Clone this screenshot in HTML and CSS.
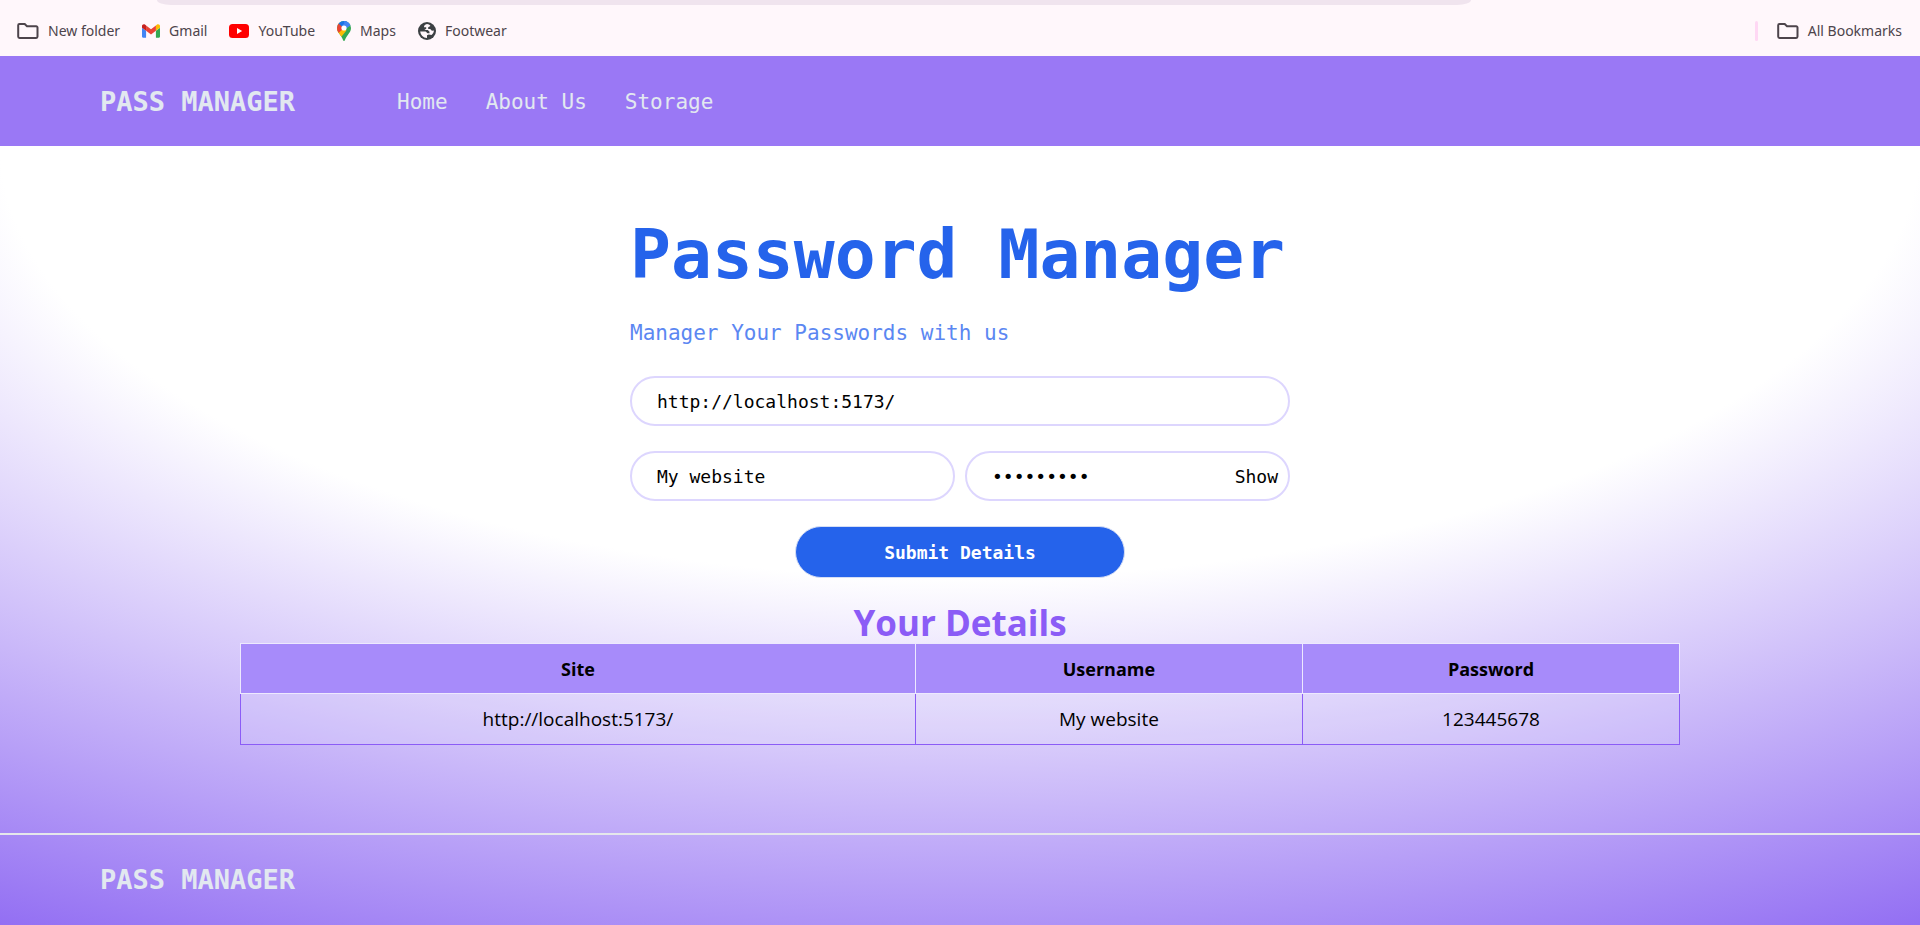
FILE: index.html
```html
<!DOCTYPE html>
<html lang="en">
<head>
<meta charset="utf-8">
<meta name="viewport" content="width=device-width, initial-scale=1">
<title>Pass Manager</title>
<link rel="stylesheet" href="styles.css">
</head>
<body>
<div class="bookmarks">
  <div class="toolbar-edge"></div>
  <ul class="bookmark-list">
    <li><a class="bookmark" href="#">
      <svg class="icon-folder" viewBox="0 0 22 16" aria-hidden="true"><path d="M2.5 1h5.2l2.3 2.3h9.2a1.3 1.3 0 0 1 1.3 1.3v9a1.3 1.3 0 0 1-1.3 1.3H2.5a1.3 1.3 0 0 1-1.3-1.3V2.3A1.3 1.3 0 0 1 2.5 1z"/></svg>
      New folder</a></li>
    <li><a class="bookmark" href="#">
      <svg class="icon-gmail" viewBox="52 42 88 66" aria-hidden="true"><path fill="#4285f4" d="M58 108h14V74L52 59v43c0 3.3 2.7 6 6 6"/><path fill="#34a853" d="M120 108h14c3.3 0 6-2.7 6-6V59l-20 15"/><path fill="#fbbc04" d="M120 48v26l20-15v-8c0-7.400-8.500-11.700-14.400-7.200"/><path fill="#ea4335" d="M72 74V48l24 18 24-18v26L96 92"/><path fill="#c5221f" d="M52 51v8l20 15V48l-5.600-4.200C60.500 39.300 52 43.600 52 51"/></svg>
      Gmail</a></li>
    <li><a class="bookmark" href="#">
      <svg class="icon-youtube" viewBox="0 0 20 14" aria-hidden="true"><rect width="20" height="14" rx="3.500" fill="#f00"/><path fill="#fff" d="M8 4v6l5.200-3z"/></svg>
      YouTube</a></li>
    <li><a class="bookmark" href="#">
      <svg class="icon-maps" viewBox="0 0 14 20" aria-hidden="true">
        <defs><clipPath id="pin"><path d="M7 0a7 7 0 0 1 7 7c0 3-1.500 4.600-3.200 6.900C9.300 15.900 8.500 17.500 7.900 19.300c-.3.900-1.500.9-1.800 0-.6-1.800-1.400-3.400-2.900-5.400C1.500 11.600 0 10 0 7a7 7 0 0 1 7-7z"/></clipPath></defs>
        <g clip-path="url(#pin)"><path fill="#34a853" d="M0 0h14v20H0z"/><path fill="#fbbc04" d="M-1 8l4-3 6.500 4.500-7 8.500z"/><path fill="#ea4335" d="M0 1l7 6-5.500 5L-2 7z"/><path fill="#1a73e8" d="M1.500 2.400L5 5.400 10 0H3z"/><path fill="#4285f4" d="M6 7L13 0h-3L4.500 5z"/><path fill="#4285f4" d="M7 0h7v4L8.500 8z"/></g><circle cx="7" cy="7" r="2.600" fill="#fff"/>
      </svg>
      Maps</a></li>
    <li><a class="bookmark" href="#">
      <svg class="icon-globe" viewBox="0 0 18 18" aria-hidden="true"><circle cx="9" cy="9" r="9" fill="#3c4043"/><path fill="#fff7fb" d="M9 2c-2.200.5-3 1.500-3 3.200h2.200v1.600L6.400 8H9.800l1.700 1.700v1.600h-2l-1.800-1.700H2.200C2.600 13 5.200 16 9 16v-2.800l1.800-.6 2.700.5c1.500-1.200 2.400-2.800 2.400-4.500l-2 .2-1.700-1.700h-2V5.300l2.200-1.400C11.600 2.700 10.400 2.100 9 2z"/></svg>
      Footwear</a></li>
  </ul>
  <a class="bookmark all-bookmarks" href="#">
    <svg class="icon-folder" viewBox="0 0 22 16" aria-hidden="true"><path d="M2.500 1h5.200l2.300 2.300h9.200a1.300 1.300 0 0 1 1.300 1.300v9a1.300 1.300 0 0 1-1.300 1.300H2.500a1.300 1.300 0 0 1-1.300-1.300V2.300A1.300 1.300 0 0 1 2.500 1z"/></svg>
    All Bookmarks</a>
</div>

<div class="app">
  <header class="navbar">
    <div class="brand">PASS MANAGER</div>
    <nav class="nav-links">
      <a href="#">Home</a>
      <a href="#">About Us</a>
      <a href="#">Storage</a>
    </nav>
  </header>

  <main class="main">
    <section class="manager">
      <h1 class="title">Password Manager</h1>
      <p class="subtitle">Manager Your Passwords with us</p>
      <form class="form">
        <input class="field" type="text" aria-label="Site" value="http://localhost:5173/">
        <div class="field-row">
          <input class="field" type="text" aria-label="Username" value="My website">
          <div class="password">
            <input class="field" type="password" aria-label="Password" value="123445678">
            <button class="show" type="button">Show</button>
          </div>
        </div>
        <button class="submit" type="button">Submit Details</button>
      </form>
    </section>

    <section class="details">
      <h2 class="details-title">Your Details</h2>
      <table class="details-table">
        <colgroup><col class="col-site"><col class="col-user"><col class="col-pass"></colgroup>
        <thead><tr><th scope="col">Site</th><th scope="col">Username</th><th scope="col">Password</th></tr></thead>
        <tbody><tr><td>http://localhost:5173/</td><td>My website</td><td>123445678</td></tr></tbody>
      </table>
    </section>
  </main>

  <footer class="footer">
    <div class="brand">PASS MANAGER</div>
  </footer>
</div>
</body>
</html>
```

FILE: styles.css
```css
* {
  box-sizing: border-box;
  margin: 0;
  padding: 0;
}

body {
  display: flex;
  flex-direction: column;
  min-height: 100vh;
  font-family: "Open Sans", "Noto Sans", sans-serif;
  font-size: 19px;
  color: #000;
}

a {
  color: inherit;
  text-decoration: none;
}

/* Bookmarks bar */
.bookmarks {
  position: relative;
  display: flex;
  align-items: center;
  justify-content: space-between;
  height: 56px;
  padding: 5px 18px 0 17px;
  background: #fff7fb;
  color: #4d444b;
  font-family: "Noto Sans", sans-serif;
  font-size: 14px;
}

.toolbar-edge {
  position: absolute;
  top: 0;
  left: 8.2%;
  right: 23.4%;
  height: 5px;
  border-radius: 0 0 14px 14px / 0 0 5px 5px;
  background: #f0e4ee;
}

.bookmark-list {
  display: flex;
  align-items: center;
  gap: 22px;
  list-style: none;
}

.bookmark {
  display: flex;
  align-items: center;
  gap: 9px;
}

.all-bookmarks::before {
  content: "";
  width: 3px;
  height: 20px;
  margin-right: 10px;
  border-radius: 2px;
  background: #ffd8f4;
}

.icon-folder {
  width: 22px;
  height: 16px;
  fill: none;
  stroke: #4d444b;
  stroke-width: 2;
}

.icon-gmail { width: 18px; height: 14px; }
.icon-youtube { width: 20px; height: 14px; }
.icon-maps { width: 14px; height: 20px; }
.icon-globe { width: 18px; height: 18px; }

/* Application */
.app {
  flex: 1;
  display: flex;
  flex-direction: column;
  background: radial-gradient(125% 125% at 50% 10%, #fff 40%, #63e 100%);
}

.brand {
  font-family: "DejaVu Sans Mono", monospace;
  font-size: 27px;
  line-height: 40px;
  font-weight: 700;
  color: #e2e8f0;
}

.navbar {
  display: flex;
  align-items: center;
  gap: 102px;
  min-height: 90px;
  padding: 2px 100px 0;
  background: #9a78f5;
}

.nav-links {
  display: flex;
  gap: 38px;
  font-family: "DejaVu Sans Mono", monospace;
  font-size: 21px;
  color: #e2e8f0;
}

.main {
  flex: 1;
  display: flex;
  flex-direction: column;
  align-items: center;
  gap: 25px;
  padding-top: 72px;
}

.manager {
  width: 660px;
  max-width: 100%;
  font-family: "DejaVu Sans Mono", monospace;
}

.title {
  font-size: 68px;
  line-height: 74px;
  font-weight: 700;
  color: #2563eb;
  white-space: nowrap;
}

.subtitle {
  margin-top: 24px;
  font-size: 21px;
  line-height: 34px;
  color: #5b87f2;
}

.form {
  display: flex;
  flex-direction: column;
  gap: 25px;
  margin-top: 26px;
}

.field-row {
  display: grid;
  grid-template-columns: 1fr 1fr;
  gap: 10px;
}

.field {
  display: block;
  width: 100%;
  height: 50px;
  padding: 0 25px;
  border: 2px solid #ddd6fe;
  border-radius: 25px;
  background: #fff;
  font: 18px "DejaVu Sans Mono", monospace;
  color: #000;
}

.password {
  position: relative;
}

.show {
  position: absolute;
  top: 0;
  right: 12px;
  height: 50px;
  border: 0;
  background: none;
  font: 18px "DejaVu Sans Mono", monospace;
  color: #000;
}

.submit {
  align-self: center;
  width: 50%;
  height: 52px;
  border: 1px solid #d5def5;
  border-radius: 26px;
  background: #2563eb;
  font: 700 18px "DejaVu Sans Mono", monospace;
  color: #fff;
}

/* Saved details */
.details {
  width: 75%;
}

.details-title {
  font-size: 35px;
  line-height: 40px;
  font-weight: 700;
  text-align: center;
  color: #8b5cf6;
}

.details-table {
  width: 100%;
  border-collapse: collapse;
  table-layout: fixed;
  text-align: center;
}

.col-site { width: 46.9%; }
.col-user { width: 26.9%; }
.col-pass { width: 26.2%; }

.details-table th {
  height: 50px;
  border: 1px solid #ede9fe;
  background: #a78bfa;
  font-size: 18px;
  font-weight: 700;
}

.details-table td {
  height: 51px;
  border: 1px solid #8b5cf6;
  background: rgba(237, 233, 254, 0.15);
}

.footer {
  display: flex;
  align-items: center;
  min-height: 92px;
  padding: 0 100px;
  border-top: 2px solid #e5e7eb;
}
```
